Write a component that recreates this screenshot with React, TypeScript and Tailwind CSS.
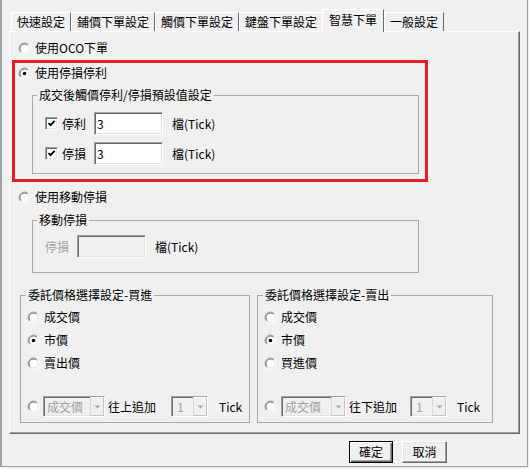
import React from "react";

const sunken =
  "border border-t-[#a0a0a0] border-l-[#a0a0a0] border-b-white border-r-white shadow-[inset_1px_1px_0_#696969,inset_-1px_-1px_0_#e3e3e3]";

function Radio({ checked = false }: { checked?: boolean }) {
  return (
    <svg width="13" height="13" viewBox="0 0 13 13" className="shrink-0">
      <circle cx="6.5" cy="6.5" r="5.5" fill="#ffffff" />
      <path d="M10.4 2.6 A5.5 5.5 0 0 0 2.6 10.4" stroke="#a0a0a0" fill="none" />
      <path d="M9.7 3.3 A4.5 4.5 0 0 0 3.3 9.7" stroke="#696969" fill="none" />
      <path d="M2.6 10.4 A5.5 5.5 0 0 0 10.4 2.6" stroke="#ffffff" fill="none" />
      <path d="M3.3 9.7 A4.5 4.5 0 0 0 9.7 3.3" stroke="#e3e3e3" fill="none" />
      {checked && <circle cx="6.5" cy="6.5" r="1.8" fill="#000000" />}
    </svg>
  );
}

function Check() {
  return (
    <span className={`flex h-[13px] w-[13px] shrink-0 items-center justify-center bg-white ${sunken}`}>
      <svg width="9" height="9" viewBox="0 0 9 9">
        <path d="M1.5 4 L3.5 6.2 L7.6 1.8" stroke="#000" strokeWidth="1.8" fill="none" />
      </svg>
    </span>
  );
}

function Combo({ value, w, pl }: { value: string; w: string; pl: string }) {
  return (
    <div className={`flex h-[21px] shrink-0 items-center bg-[#f0f0f0] ${w} ${sunken}`}>
      <span className={`flex-1 whitespace-nowrap text-[#a0a0a0] ${pl}`}>{value}</span>
      <span className="flex h-full w-[14px] items-center justify-center border border-[#c4c4c4] border-t-white border-l-[#d8d8d8] bg-[#f0f0f0]">
        <svg width="7" height="4" viewBox="0 0 7 4">
          <polygon points="0.5,0.5 6.5,0.5 3.5,3.5" fill="#a8a8a8" />
        </svg>
      </span>
    </div>
  );
}

function RadioRow({ label, checked = false, mt }: { label: string; checked?: boolean; mt: string }) {
  return (
    <div className={`ml-[6px] flex h-4 items-center ${mt}`}>
      <Radio checked={checked} />
      <span className="ml-[4px]">{label}</span>
    </div>
  );
}

const TABS = ["快速設定", "鋪價下單設定", "觸價下單設定", "鍵盤下單設定", "智慧下單", "一般設定"];

function PriceGroup({
  title,
  third,
  chase,
  width,
  comboW,
  gaps,
}: {
  title: string;
  third: string;
  chase: string;
  width: string;
  comboW: string;
  gaps: [string, string, string];
}) {
  return (
    <fieldset className={`border border-[#a8a8a8] pb-[5px] ${width}`}>
      <legend className="ml-[5px] px-[2px] leading-4">{title}</legend>
      <RadioRow label="成交價" mt="mt-[6px]" />
      <RadioRow label="市價" checked mt="mt-[7px]" />
      <RadioRow label={third} mt="mt-[7px]" />
      <div className="mt-[25px] ml-[6px] flex h-[21px] items-center">
        <Radio />
        <div className={gaps[0]}>
          <Combo value="成交價" w={comboW} pl="pl-[3px]" />
        </div>
        <span className="ml-[3px] whitespace-nowrap">{chase}</span>
        <div className={gaps[1]}>
          <Combo value="1" w="w-[37px]" pl="pl-[5px]" />
        </div>
        <span className={gaps[2]}>Tick</span>
      </div>
    </fieldset>
  );
}

export default function App() {
  return (
    <div className="h-[469px] w-[529px] bg-[#f0f0f0] font-['Noto_Sans_CJK_TC','Microsoft_JhengHei',sans-serif] text-[12px] leading-4 text-black">
      <div className="flex h-[467px] w-[528px] flex-col border-r border-b border-l-2 border-[#a0a0a0]">
        {/* tabs */}
        <div className="mt-[9px] ml-[9px] flex h-[22px] items-end">
          {TABS.map((t) =>
            t === "智慧下單" ? (
              <div
                key={t}
                className="relative z-10 -mb-px -ml-px flex h-[23px] items-center whitespace-nowrap border-t border-l border-r border-white border-r-[#696969] bg-[#f0f0f0] px-[6px] pb-[2px]"
              >
                {t}
              </div>
            ) : (
              <div
                key={t}
                className="flex h-[19px] items-center whitespace-nowrap border-t border-l border-r border-white border-r-[#696969] px-[5px]"
              >
                {t}
              </div>
            )
          )}
        </div>

        {/* panel */}
        <div className="ml-[7px] flex h-[403px] w-[511px] flex-col border-t border-l border-r border-b border-white border-r-[#696969] border-b-[#696969] shadow-[inset_-1px_-1px_0_#a0a0a0]">
          <div className="mt-[8px] ml-[8px] flex h-4 items-center">
            <Radio />
            <span className="ml-[4px]">使用OCO下單</span>
          </div>

          <div className="mt-[4px] ml-[2px] flex h-[122px] w-[416px] flex-col border-[3px] border-[#e31e25]">
            <div className="mt-[2px] ml-[3px] flex h-4 items-center">
              <Radio checked />
              <span className="ml-[4px]">使用停損停利</span>
            </div>
            <fieldset className="mt-[6px] ml-[17px] w-[387px] border border-[#a8a8a8] pb-[8px]">
              <legend className="ml-[4px] px-[2px] leading-4">成交後觸價停利/停損預設值設定</legend>
              {["停利", "停損"].map((l, i) => (
                <div key={l} className={`ml-[12px] flex h-[23px] items-center ${i === 0 ? "mt-[9px]" : "mt-[7px]"}`}>
                  <Check />
                  <span className="ml-[4px]">{l}</span>
                  <div className={`ml-[8px] flex h-[23px] w-[69px] items-center bg-white pl-[2px] ${sunken}`}>3</div>
                  <span className="ml-[9px]">檔(Tick)</span>
                </div>
              ))}
            </fieldset>
          </div>

          <div className="mt-[7px] ml-[8px] flex h-4 items-center">
            <Radio />
            <span className="ml-[4px]">使用移動停損</span>
          </div>

          <fieldset className="mt-[7px] ml-[22px] w-[387px] border border-[#a8a8a8] pb-[14px]">
            <legend className="ml-[4px] px-[2px] leading-4">移動停損</legend>
            <div className="mt-[7px] ml-[12px] flex h-[23px] items-center">
              <span className="text-[#a0a0a0]">停損</span>
              <div className={`ml-[8px] h-[23px] w-[69px] bg-[#f0f0f0] ${sunken}`} />
              <span className="ml-[9px]">檔(Tick)</span>
            </div>
          </fieldset>

          <div className="mt-[14px] ml-[10px] flex gap-[7px]">
            <PriceGroup
              title="委託價格選擇設定-買進"
              third="賣出價"
              chase="往上追加"
              width="w-[230px]"
              comboW="w-[62px]"
              gaps={["ml-[3px]", "ml-[15px]", "ml-[11px]"]}
            />
            <PriceGroup
              title="委託價格選擇設定-賣出"
              third="買進價"
              chase="往下追加"
              width="w-[236px]"
              comboW="w-[65px]"
              gaps={["ml-[4px]", "ml-[13px]", "ml-[10px]"]}
            />
          </div>
        </div>

        {/* buttons */}
        <div className="mt-[7px] ml-[347px] flex gap-[9px]">
          <button className="flex h-[22px] w-[44px] items-center justify-center border border-black bg-[#f0f0f0] shadow-[inset_1px_1px_0_#ffffff,inset_-1px_-1px_0_#696969,inset_-2px_-2px_0_#a0a0a0]">
            確定
          </button>
          <button className="flex h-[22px] w-[45px] items-center justify-center border border-t-white border-l-white border-b-[#696969] border-r-[#696969] bg-[#f0f0f0] shadow-[inset_-1px_-1px_0_#a0a0a0,inset_1px_1px_0_#e3e3e3]">
            取消
          </button>
        </div>
      </div>
    </div>
  );
}
